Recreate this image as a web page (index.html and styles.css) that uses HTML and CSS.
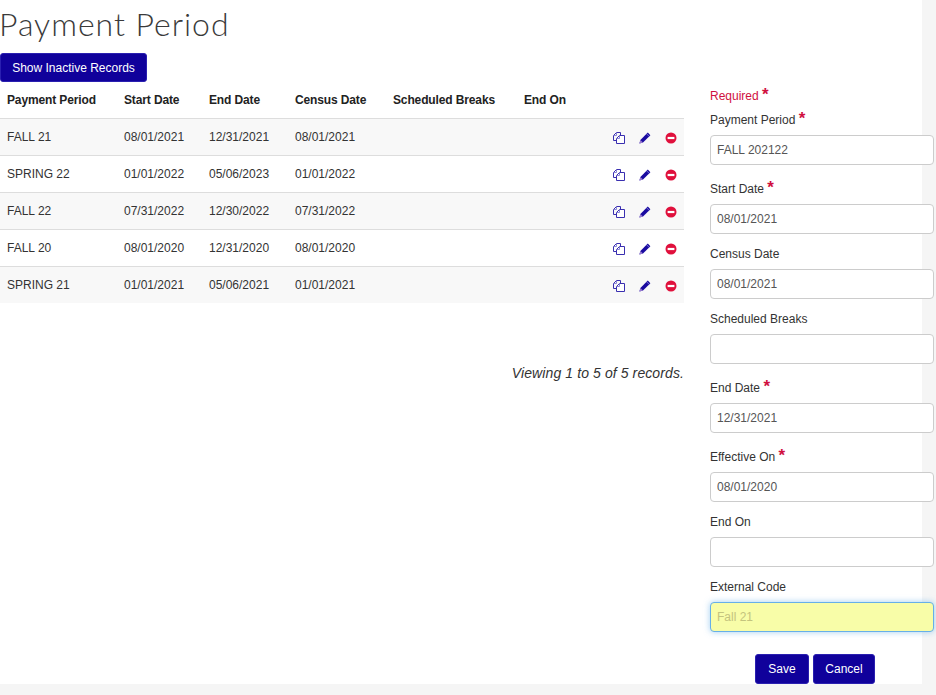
FILE: index.html
```html
<!DOCTYPE html>
<html lang="en">
<head>
<meta charset="utf-8">
<title>Payment Period</title>
<link rel="stylesheet" href="styles.css">
</head>
<body>
<svg class="defs" width="0" height="0" aria-hidden="true">
  <symbol id="i-copy" viewBox="0 0 12 12">
    <path d="M3.5 8.5H.5V3.5L3.5 .5H7.5V3" fill="none" stroke="#3a2fb0" stroke-width="1"/>
    <path d="M.8 3.5H3.5V.8" fill="none" stroke="#8a86d8" stroke-width="1"/>
    <path d="M3.5 6.5L6.5 3.5H11.5V11.5H3.5Z" fill="#fff" stroke="#3a2fb0" stroke-width="1"/>
    <path d="M3.8 6.5H6.5V3.8" fill="none" stroke="#8a86d8" stroke-width="1"/>
  </symbol>
  <symbol id="i-edit" viewBox="0 0 12 12">
    <path d="M8.8 .6L11.4 3.2 4 10.6 .4 11.6 1.4 8Z" fill="#1a0aa0"/>
    <path d="M1.4 8L4 10.6 .4 11.6Z" fill="#9a7cd0"/>
    <path d="M7.6 1.8L10.2 4.4" stroke="#9fa0e8" stroke-width=".7" fill="none"/>
  </symbol>
  <symbol id="i-del" viewBox="0 0 12 12">
    <circle cx="6" cy="6" r="5.5" fill="#e0103c"/>
    <rect x="2.6" y="4.9" width="6.8" height="2.2" fill="#fff"/>
  </symbol>
</svg>
<div class="page">
  <main class="main">
    <h1 class="title">Payment Period</h1>
    <button class="btn btn-show" type="button">Show Inactive Records</button>
    <table class="grid">
      <thead>
        <tr>
          <th class="c1">Payment Period</th><th class="c2">Start Date</th><th class="c3">End Date</th><th class="c4">Census Date</th><th class="c5">Scheduled Breaks</th><th class="c6">End On</th><th class="c7"></th>
        </tr>
      </thead>
      <tbody>
        <tr><td>FALL 21</td><td>08/01/2021</td><td>12/31/2021</td><td>08/01/2021</td><td></td><td></td>
          <td><div class="acts"><svg class="ic"><use href="#i-copy"/></svg><svg class="ic"><use href="#i-edit"/></svg><svg class="ic"><use href="#i-del"/></svg></div></td></tr>
        <tr><td>SPRING 22</td><td>01/01/2022</td><td>05/06/2023</td><td>01/01/2022</td><td></td><td></td>
          <td><div class="acts"><svg class="ic"><use href="#i-copy"/></svg><svg class="ic"><use href="#i-edit"/></svg><svg class="ic"><use href="#i-del"/></svg></div></td></tr>
        <tr><td>FALL 22</td><td>07/31/2022</td><td>12/30/2022</td><td>07/31/2022</td><td></td><td></td>
          <td><div class="acts"><svg class="ic"><use href="#i-copy"/></svg><svg class="ic"><use href="#i-edit"/></svg><svg class="ic"><use href="#i-del"/></svg></div></td></tr>
        <tr><td>FALL 20</td><td>08/01/2020</td><td>12/31/2020</td><td>08/01/2020</td><td></td><td></td>
          <td><div class="acts"><svg class="ic"><use href="#i-copy"/></svg><svg class="ic"><use href="#i-edit"/></svg><svg class="ic"><use href="#i-del"/></svg></div></td></tr>
        <tr><td>SPRING 21</td><td>01/01/2021</td><td>05/06/2021</td><td>01/01/2021</td><td></td><td></td>
          <td><div class="acts"><svg class="ic"><use href="#i-copy"/></svg><svg class="ic"><use href="#i-edit"/></svg><svg class="ic"><use href="#i-del"/></svg></div></td></tr>
      </tbody>
    </table>
    <p class="viewing">Viewing 1 to 5 of 5 records.</p>
  </main>
  <form class="form">
    <div class="required">Required <span class="star">*</span></div>
    <div class="field f-first"><label>Payment Period <span class="star">*</span></label><input class="inp" value="FALL 202122"></div>
    <div class="field f-req"><label>Start Date <span class="star">*</span></label><input class="inp" value="08/01/2021"></div>
    <div class="field"><label>Census Date</label><input class="inp" value="08/01/2021"></div>
    <div class="field"><label>Scheduled Breaks</label><input class="inp" value=""></div>
    <div class="field f-req"><label>End Date <span class="star">*</span></label><input class="inp" value="12/31/2021"></div>
    <div class="field f-req"><label>Effective On <span class="star">*</span></label><input class="inp" value="08/01/2020"></div>
    <div class="field"><label>End On</label><input class="inp" value=""></div>
    <div class="field"><label>External Code</label><input class="inp inp-focus" value="Fall 21"></div>
    <div class="actions"><button class="btn btn-save" type="button">Save</button><button class="btn btn-cancel" type="button">Cancel</button></div>
  </form>
</div>
</body>
</html>
```
FILE: styles.css
```css
* { box-sizing: border-box; }
html, body { margin: 0; padding: 0; height: 100%; overflow: hidden; }
body { background: #f5f5f5; font-family: "Liberation Sans", Arial, sans-serif; font-size: 12px; color: #333; }
.defs { position: absolute; }
.page { width: 922px; height: 684px; background: #fff; display: flex; align-items: flex-start; }
.main { width: 684px; flex: none; }
.title { margin: 0; font-family: Lato, sans-serif; font-weight: 300; font-size: 32px; line-height: 48px; color: #3a3a3a; letter-spacing: .98px; text-indent: -1px; }
.btn { background: #10019b; color: #fff; border: 1px solid #2a1fb0; border-radius: 3px; font-family: "Liberation Sans", Arial, sans-serif; font-size: 12px; padding: 0; height: 30px; }
.btn-show { width: 147px; height: 29px; margin-top: 5px; display: block; }
.grid { width: 684px; border-collapse: collapse; table-layout: fixed; }
.grid th { height: 36px; font-weight: bold; font-size: 12px; letter-spacing: -.13px; text-align: left; padding: 0 0 0 7px; color: #222; border-bottom: 1px solid #ddd; }
.grid td { height: 37px; padding: 0 0 0 7px; font-size: 12px; color: #333; border-bottom: 1px solid #ddd; }
.grid tbody tr:nth-child(odd) td { background: #f8f8f8; }
.grid tbody tr:last-child td { border-bottom: 0; }
.c1 { width: 117px; }
.c2 { width: 85px; }
.c3 { width: 86px; }
.c4 { width: 98px; }
.c5 { width: 131px; }
.c6 { width: 80px; }
.acts { display: flex; justify-content: flex-end; align-items: center; gap: 14px; padding: 2px 7px 0 0; }
.ic { width: 12px; height: 12px; display: block; }
.viewing { margin: 62px 0 0; text-align: right; font-style: italic; font-size: 14px; letter-spacing: .1px; color: #333; }
.form { width: 224px; margin-left: 26px; flex: none; padding-top: 88px; }
.required { color: #d0103f; font-size: 12px; line-height: 17px; }
.star { color: #d0103f; font-weight: bold; font-size: 17px; line-height: 10px; }
.field { margin-top: 11px; }
.f-first { margin-top: 6px; }
.f-req { padding-top: 4px; }
.field label { display: block; font-size: 12px; line-height: 19px; height: 19px; color: #333; margin-bottom: 5px; }
.inp { display: block; width: 224px; height: 30px; border: 1px solid #ccc; border-radius: 4px; padding: 0 6px; font-family: "Liberation Sans", Arial, sans-serif; font-size: 12px; color: #555; background: #fff; outline: 0; }
.inp-focus { background: #f8fda8; border-color: #66afe9; box-shadow: 0 0 6px rgba(102,175,233,.6); color: #c4c47e; }
.actions { display: flex; gap: 4px; margin-top: 22px; padding-left: 45px; }
.btn-save { width: 54px; }
.btn-cancel { width: 62px; }
```
